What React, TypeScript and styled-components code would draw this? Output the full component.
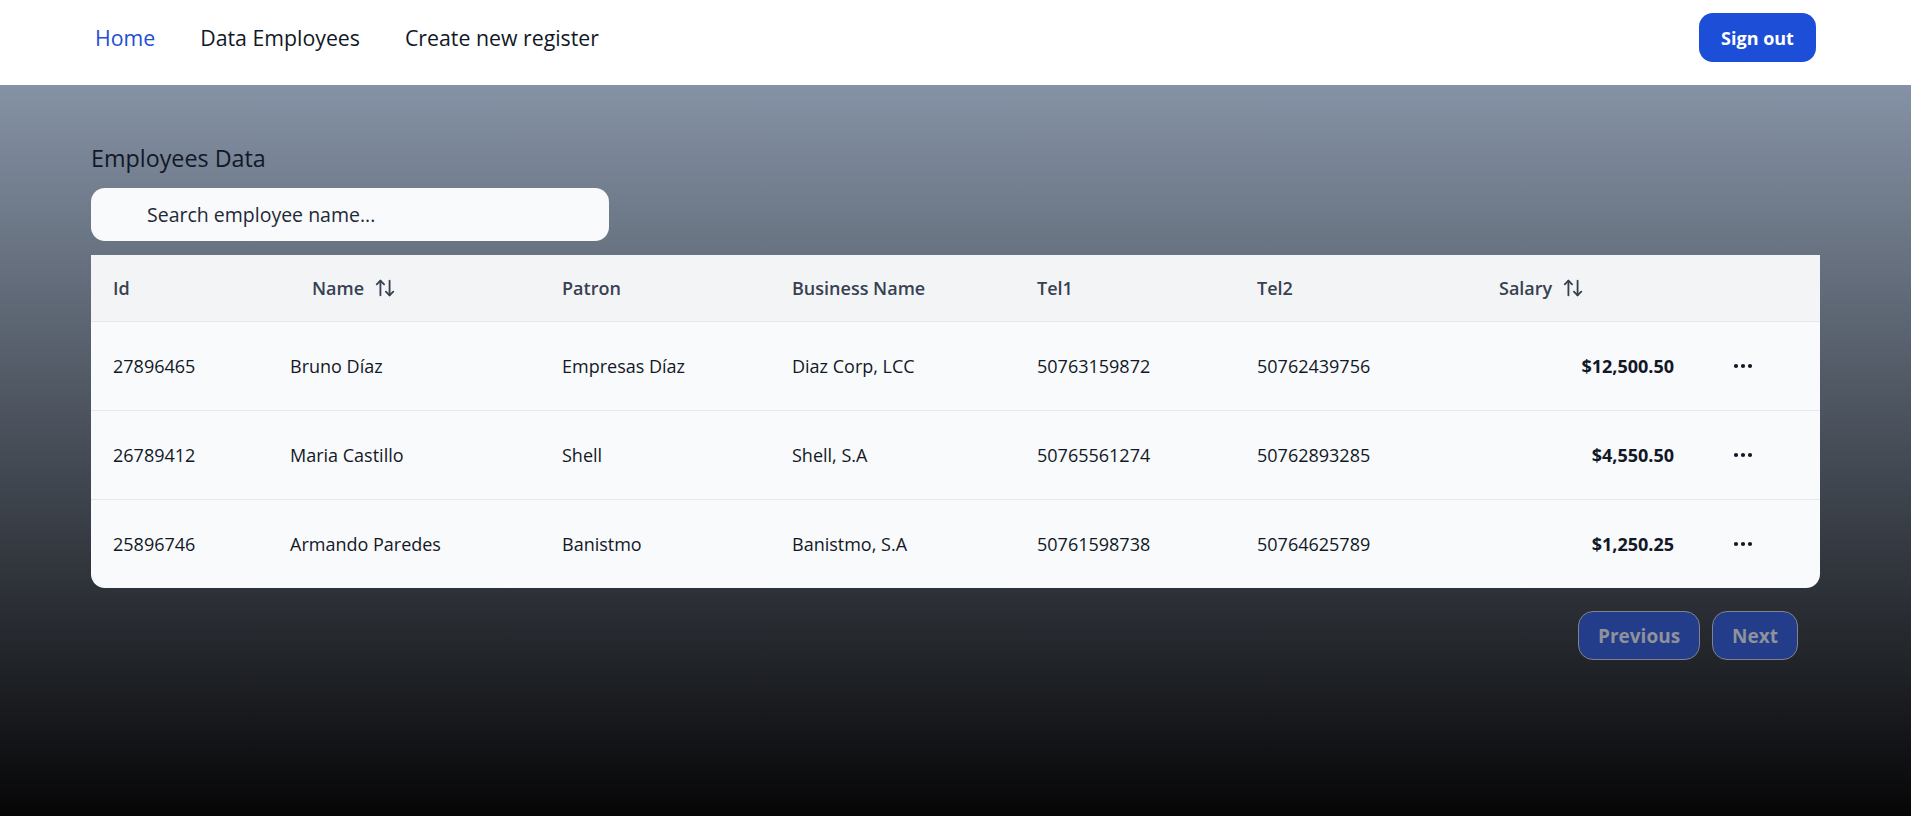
import React, { useState } from "react";
import styled, { createGlobalStyle } from "styled-components";
import { ArrowUpDown, Ellipsis } from "lucide-react";

interface IEmployee {
  id: string;
  name: string;
  patron: string;
  business: string;
  tel1: string;
  tel2: string;
  salary: number;
}

const employees: IEmployee[] = [
  {
    id: "27896465",
    name: "Bruno Díaz",
    patron: "Empresas Díaz",
    business: "Diaz Corp, LCC",
    tel1: "50763159872",
    tel2: "50762439756",
    salary: 12500.5,
  },
  {
    id: "26789412",
    name: "Maria Castillo",
    patron: "Shell",
    business: "Shell, S.A",
    tel1: "50765561274",
    tel2: "50762893285",
    salary: 4550.5,
  },
  {
    id: "25896746",
    name: "Armando Paredes",
    patron: "Banistmo",
    business: "Banistmo, S.A",
    tel1: "50761598738",
    tel2: "50764625789",
    salary: 1250.25,
  },
];

const money = (n: number) =>
  "$" + n.toLocaleString("en-US", { minimumFractionDigits: 2, maximumFractionDigits: 2 });

const App = (): JSX.Element => {
  const [search, setSearch] = useState("");
  const rows = employees.filter((e) =>
    e.name.toLowerCase().includes(search.toLowerCase())
  );

  return (
    <>
      <GlobalStyle />
      <Page>
        <NavBar>
          <NavLinks>
            <NavLink $active>Home</NavLink>
            <NavLink>Data Employees</NavLink>
            <NavLink>Create new register</NavLink>
          </NavLinks>
          <SignOut>Sign out</SignOut>
        </NavBar>
        <Main>
          <Title>Employees Data</Title>
          <SearchInput
            placeholder="Search employee name..."
            value={search}
            onChange={(e) => setSearch(e.target.value)}
          />
          <Table>
            <HeadRow>
              <HeadCell>Id</HeadCell>
              <HeadCell>
                <SortButton>
                  Name <ArrowUpDown size={22} strokeWidth={2} />
                </SortButton>
              </HeadCell>
              <HeadCell>Patron</HeadCell>
              <HeadCell>Business Name</HeadCell>
              <HeadCell>Tel1</HeadCell>
              <HeadCell>Tel2</HeadCell>
              <HeadCell>
                <SortButton>
                  Salary <ArrowUpDown size={22} strokeWidth={2} />
                </SortButton>
              </HeadCell>
              <HeadCell />
            </HeadRow>
            {rows.map((r) => (
              <BodyRow key={r.id}>
                <Cell>{r.id}</Cell>
                <Cell>{r.name}</Cell>
                <Cell>{r.patron}</Cell>
                <Cell>{r.business}</Cell>
                <Cell>{r.tel1}</Cell>
                <Cell>{r.tel2}</Cell>
                <Cell $right $bold>
                  {money(r.salary)}
                </Cell>
                <Cell $actions>
                  <Ellipsis size={24} strokeWidth={2.2} color="#111827" />
                </Cell>
              </BodyRow>
            ))}
          </Table>
          <Pagination>
            <PageButton disabled>Previous</PageButton>
            <PageButton disabled>Next</PageButton>
          </Pagination>
        </Main>
      </Page>
    </>
  );
};

export default App;

const GlobalStyle = createGlobalStyle`
  body {
    margin: 0;
    font-family: "Open Sans", "Noto Sans", sans-serif;
  }
  * {
    box-sizing: border-box;
  }
`;

const Page = styled.div`
  min-height: 100vh;
  background: linear-gradient(to bottom, #94a3b8, #060607);
`;

const NavBar = styled.nav`
  height: 85px;
  background: #ffffff;
  display: flex;
  align-items: center;
  justify-content: space-between;
  padding: 0 95px 10px;
`;

const NavLinks = styled.div`
  display: flex;
  align-items: center;
  gap: 45px;
`;

const NavLink = styled.a<{ $active?: boolean }>`
  font-size: 21.3px;
  font-weight: 500;
  color: ${(p) => (p.$active ? "#1d4ed8" : "#111827")};
  cursor: pointer;
`;

const SignOut = styled.button`
  width: 117px;
  height: 49px;
  border: none;
  border-radius: 14px;
  background: #1d4ed8;
  color: #ffffff;
  font-family: inherit;
  font-size: 18px;
  font-weight: 700;
  cursor: pointer;
`;

const Main = styled.main`
  padding: 57px 91px 0;
  display: flex;
  flex-direction: column;
`;

const Title = styled.h2`
  margin: 0 0 14px;
  font-size: 23.3px;
  font-weight: 400;
  line-height: 32px;
  color: #111827;
`;

const SearchInput = styled.input`
  width: 518px;
  height: 53px;
  border: none;
  border-radius: 14px;
  background: #f9fafb;
  padding-left: 56px;
  font-family: inherit;
  font-size: 19.5px;
  color: #111827;
  outline: none;
  margin-bottom: 14px;

  &::placeholder {
    color: #1f2937;
  }
`;

const Table = styled.div`
  display: grid;
  grid-template-columns: 177px 272px 230px 245px 220px 220px 242px 1fr;
  background: #f9fafb;
  border-radius: 0 0 14px 14px;
  overflow: hidden;
`;

const HeadRow = styled.div`
  display: contents;
`;

const HeadCell = styled.div`
  height: 66px;
  background: #f3f4f6;
  display: flex;
  align-items: center;
  padding: 0 22px;
  font-size: 18px;
  font-weight: 600;
  color: #374151;
`;

const SortButton = styled.span`
  display: inline-flex;
  align-items: center;
  gap: 10px;
  padding-left: 22px;
  cursor: pointer;

  svg {
    color: #374151;
  }
`;

const BodyRow = styled.div`
  display: contents;
`;

const Cell = styled.div<{ $right?: boolean; $bold?: boolean; $actions?: boolean }>`
  height: 89px;
  border-top: 1px solid #e5e7eb;
  display: flex;
  align-items: center;
  justify-content: ${(p) => (p.$right ? "flex-end" : "flex-start")};
  padding: ${(p) => (p.$actions ? "0 0 0 34px" : "0 22px")};
  padding-right: ${(p) => (p.$right ? "23px" : undefined)};
  font-size: 18px;
  font-weight: ${(p) => (p.$bold ? 700 : 400)};
  color: #111827;
`;

const Pagination = styled.div`
  display: flex;
  justify-content: flex-end;
  gap: 12px;
  margin-top: 23px;
  padding-right: 22px;
`;

const PageButton = styled.button`
  height: 49px;
  padding: 0 19px;
  border: 1px solid #80838b;
  border-radius: 15px;
  background: #243d8a;
  color: #8e929b;
  font-family: inherit;
  font-size: 19px;
  font-weight: 700;
  cursor: default;
`;
